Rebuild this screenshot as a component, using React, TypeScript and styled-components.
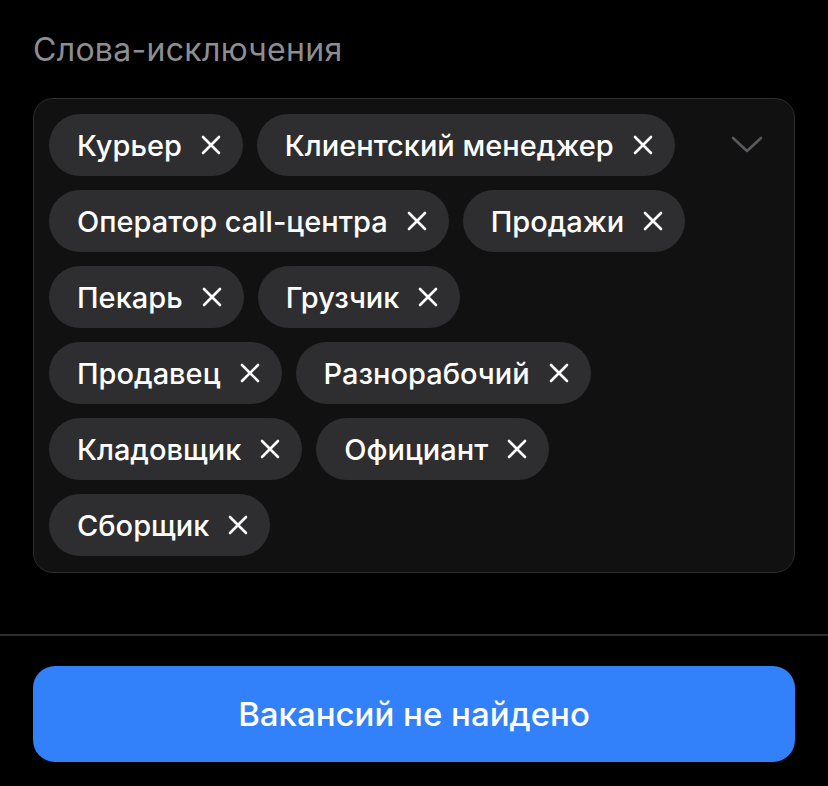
import React from 'react';
import styled, { createGlobalStyle } from 'styled-components';

const words = [
  'Курьер',
  'Клиентский менеджер',
  'Оператор call-центра',
  'Продажи',
  'Пекарь',
  'Грузчик',
  'Продавец',
  'Разнорабочий',
  'Кладовщик',
  'Официант',
  'Сборщик',
];

const App = () => {
  return (
    <Page>
      <GlobalStyle />
      <Section>
        <Label>Слова-исключения</Label>
        <Field>
          <ChipList>
            {words.map((word) => (
              <Chip key={word}>
                <span>{word}</span>
                <RemoveIcon viewBox="0 0 20 20">
                  <path d="M2 2 L18 18 M18 2 L2 18" />
                </RemoveIcon>
              </Chip>
            ))}
          </ChipList>
          <Chevron viewBox="0 0 32 18">
            <path d="M2 2 L16 15 L30 2" />
          </Chevron>
        </Field>
      </Section>
      <Divider />
      <Footer>
        <SubmitButton>Вакансий не найдено</SubmitButton>
      </Footer>
    </Page>
  );
};

export default App;

const GlobalStyle = createGlobalStyle`
  html, body {
    margin: 0;
    padding: 0;
    background: #000;
  }
  body {
    font-family: Inter, "Noto Sans", sans-serif;
    -webkit-font-smoothing: antialiased;
  }
`;

const Page = styled.div`
  width: 828px;
  height: 786px;
  background: #000;
  overflow: hidden;
`;

const Section = styled.div`
  padding: 28px 33px 0;
`;

const Label = styled.div`
  font-size: 32px;
  line-height: 44px;
  color: #8e8e92;
  font-weight: 400;
  letter-spacing: 0.3px;
  margin-bottom: 26px;
`;

const Field = styled.div`
  display: flex;
  align-items: flex-start;
  background: #111111;
  border: 1px solid #2c2c2e;
  border-radius: 20px;
  padding: 15px 15px 16px;
`;

const ChipList = styled.div`
  flex: 1;
  display: flex;
  flex-wrap: wrap;
  gap: 14px;
  padding-right: 30px;
`;

const Chip = styled.div`
  display: flex;
  align-items: center;
  gap: 19px;
  height: 62px;
  padding: 0 22px 0 28px;
  border-radius: 31px;
  background: #2e2e30;
  color: #fff;
  font-size: 29px;
  font-weight: 500;
  box-sizing: border-box;
`;

const RemoveIcon = styled.svg`
  width: 20px;
  height: 20px;
  fill: none;
  stroke: #fff;
  stroke-width: 2.6;
  stroke-linecap: round;
`;

const Chevron = styled.svg`
  width: 32px;
  height: 18px;
  margin: 22px 16px 0 0;
  fill: none;
  stroke: #5a5a5e;
  stroke-width: 2.6;
  stroke-linecap: round;
  stroke-linejoin: round;
`;

const Divider = styled.div`
  height: 2px;
  background: #2c2c2e;
  margin-top: 61px;
`;

const Footer = styled.div`
  padding: 30px 33px 0;
`;

const SubmitButton = styled.button`
  width: 100%;
  height: 96px;
  border: none;
  border-radius: 22px;
  background: #3381fa;
  color: #fff;
  font-family: Inter, "Noto Sans", sans-serif;
  font-size: 33px;
  font-weight: 500;
  cursor: pointer;
`;
